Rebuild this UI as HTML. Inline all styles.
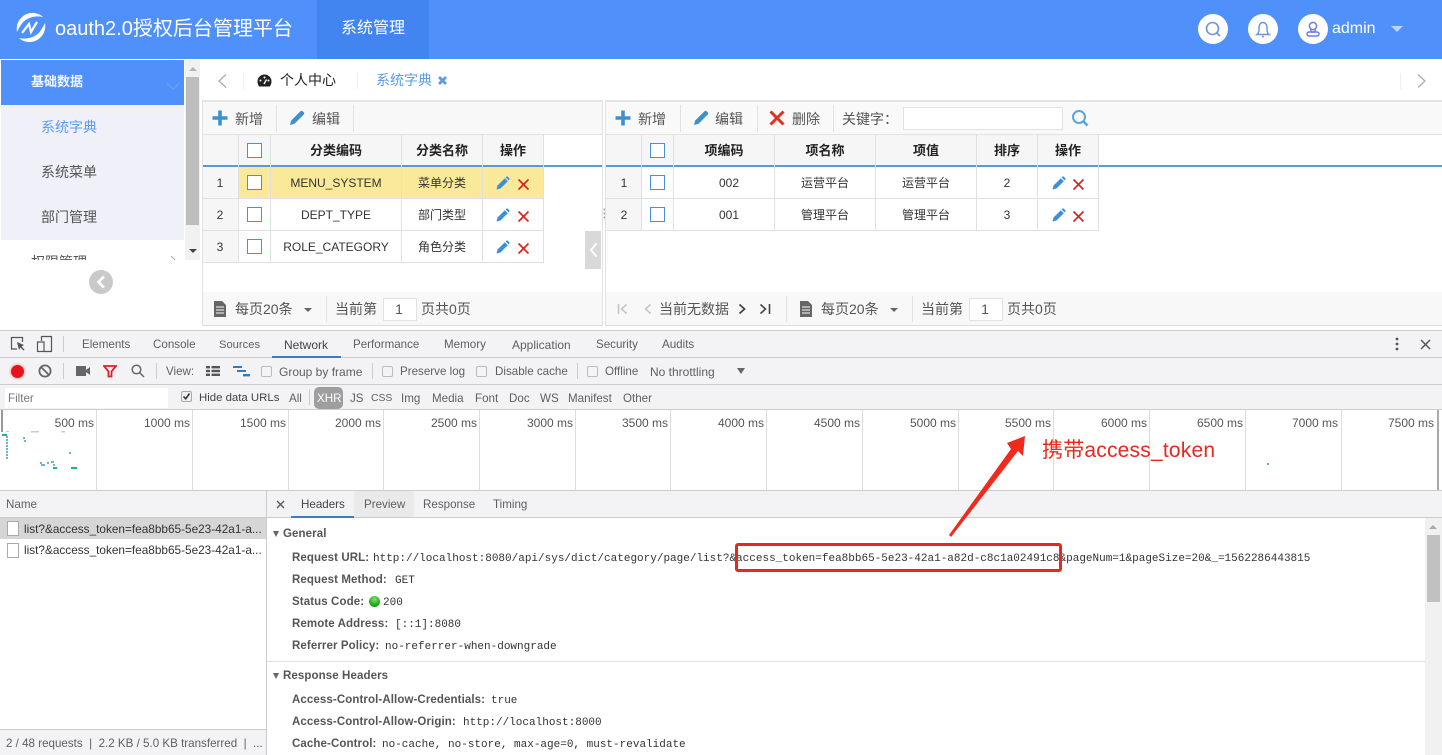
<!DOCTYPE html>
<html lang="zh"><head><meta charset="utf-8"><title>oauth2.0</title>
<style>
*{box-sizing:border-box}
html,body{margin:0;padding:0;width:1442px;height:755px;overflow:hidden;background:#fff}
body{position:relative;font-family:"Liberation Sans","Noto Sans CJK SC",sans-serif;color:#333}
.b,.t,svg.i{position:absolute}
.t{white-space:nowrap;line-height:16px;font-size:14px}
.c{transform:translateX(-50%)}
.cj{font-size:12px;color:#333;margin-top:1px}
.hd{font-size:13px;font-weight:bold;color:#222;margin-top:1px}
.g{color:#555}
.dv{font-size:11.6px;color:#5f5f5f}
.tl{font-size:12px;color:#555;text-align:right;width:70px}
.gl{position:absolute;top:410px;height:80px;width:1px;background:#ddd}
.bold{font-size:11.5px;letter-spacing:.1px;font-weight:bold;color:#555}
.mono{font-family:"Liberation Mono","DejaVu Sans Mono",monospace;font-size:11px;color:#333;margin-top:1px}
.ck{position:absolute;width:15px;height:15px;border:1px solid #4a8fd8;background:#fff}
.dc{position:absolute;width:11px;height:11px;border:1px solid #bbb;border-radius:2px;background:#f4f3f6}
.sep{position:absolute;width:1px;background:#e2e2e2}
</style></head><body>

<!-- header -->
<div class="b" style="left:0;top:0;width:1442px;height:59px;background:#4f90fb"></div>
<div class="b" style="left:317px;top:0;width:112px;height:59px;background:#4285f0"></div>
<svg class="i" style="left:16px;top:12px" width="31" height="31" viewBox="0 0 31 31">
<path id="lg" d="M1 20C-1 9 8 0 18 1C22 1.5 25 3 27 5C19 3 9 6 5 13C3 16 2 18 1 20Z" fill="#fff"/>
<path d="M1 20C-1 9 8 0 18 1C22 1.5 25 3 27 5C19 3 9 6 5 13C3 16 2 18 1 20Z" fill="#fff" transform="rotate(180 15 15.5)"/>
<path d="M6 21L13 12L15 20L21 10" fill="none" stroke="#fff" stroke-width="2.2"/></svg>
<div class="t" style="left:55px;top:17px;font-size:20px;line-height:24px;color:#fff">oauth2.0授权后台管理平台</div>
<div class="t" style="left:341px;top:21px;font-size:16px;color:#fff">系统管理</div>
<div class="b" style="left:1198px;top:14px;width:30px;height:30px;border-radius:50%;background:#fff"></div>
<div class="b" style="left:1248px;top:14px;width:30px;height:30px;border-radius:50%;background:#fff"></div>
<div class="b" style="left:1298px;top:14px;width:30px;height:30px;border-radius:50%;background:#fff"></div>
<svg class="i" style="left:1204px;top:20px" width="18" height="18" viewBox="0 0 18 18" fill="none" stroke="#6d93e8" stroke-width="1.6"><circle cx="8.5" cy="8.5" r="6"/><path d="M13 13L16 16"/></svg>
<svg class="i" style="left:1254px;top:20px" width="18" height="18" viewBox="0 0 18 18" fill="none" stroke="#6d93e8" stroke-width="1.5"><path d="M3 14.5C5 13 5 11 5 7.5C5 4.5 6.8 2.5 9 2.5S13 4.5 13 7.5C13 11 13 13 15 14.5Z"/><path d="M8 16.5H10"/></svg>
<svg class="i" style="left:1304px;top:20px" width="18" height="18" viewBox="0 0 18 18" fill="none" stroke="#6d7de8" stroke-width="1.5"><circle cx="9" cy="6" r="3.6"/><path d="M7 9.5L6.5 12H11.5L11 9.5"/><rect x="3" y="12" width="12" height="4" rx="2"/></svg>
<div class="t" style="left:1332px;top:21px;font-size:16px;color:#fff">admin</div>
<div class="b" style="left:1391px;top:26px;width:0;height:0;border-left:6px solid transparent;border-right:6px solid transparent;border-top:6px solid #bcd4fb"></div>

<!-- sidebar -->
<div class="b" style="left:1px;top:60px;width:183px;height:45px;background:#4f90fb"></div>
<div class="b" style="left:1px;top:105px;width:183px;height:135px;background:#eff0f8"></div>
<div class="t" style="left:31px;top:74px;font-size:13px;font-weight:bold;color:#f2f6ff;width:56px">基础数据</div>
<svg class="i" style="left:166px;top:82px" width="14" height="9" viewBox="0 0 14 9" fill="none" stroke="#6ea3f5" stroke-width="1"><path d="M1 1L7 7L13 1"/></svg>
<div class="t" style="left:41px;top:119px;font-size:14px;color:#5b9cf5">系统字典</div>
<div class="t" style="left:41px;top:164px;font-size:14px;color:#555">系统菜单</div>
<div class="t" style="left:41px;top:209px;font-size:14px;color:#555">部门管理</div>
<div class="b" style="left:31px;top:240px;width:60px;height:20px;overflow:hidden"><div class="t" style="left:0;top:14px;font-size:14px;color:#555">权限管理</div></div>
<svg class="i" style="left:170px;top:256px" width="8" height="5" viewBox="0 0 8 5" fill="none" stroke="#aaa"><path d="M1 0L5 4"/></svg>
<div class="b" style="left:185px;top:60px;width:15px;height:200px;background:#f1f1f1"></div>
<div class="b" style="left:186px;top:77px;width:13px;height:148px;background:#bdbdbd"></div>
<div class="b" style="left:189px;top:67px;width:0;height:0;border-left:4px solid transparent;border-right:4px solid transparent;border-bottom:4px solid #b5b5b5"></div>
<div class="b" style="left:189px;top:249px;width:0;height:0;border-left:4px solid transparent;border-right:4px solid transparent;border-top:4px solid #444"></div>
<div class="b" style="left:89px;top:270px;width:24px;height:24px;border-radius:50%;background:#c9c9c9"></div>
<svg class="i" style="left:95px;top:275px" width="12" height="14" viewBox="0 0 12 14" fill="none" stroke="#fff" stroke-width="2.6"><path d="M9 1.5L3.5 7L9 12.5"/></svg>

<!-- tabs -->
<svg class="i" style="left:216px;top:73px" width="12" height="16" viewBox="0 0 12 16" fill="none" stroke="#aaa" stroke-width="1.2"><path d="M10 1.5L3 8L10 14.5"/></svg>
<div class="sep" style="left:243px;top:73px;height:16px;background:#eee"></div>
<svg class="i" style="left:257px;top:74px" width="15" height="13" viewBox="0 0 15 13"><path d="M7.5 0.5A7 7 0 0 0 .5 7.5C.5 9.5 1.2 11 2.2 12.5H12.8C13.8 11 14.5 9.5 14.5 7.5A7 7 0 0 0 7.5 .5Z" fill="#222"/><circle cx="3.5" cy="6.5" r="1" fill="#fff"/><circle cx="7.5" cy="3.5" r="1" fill="#fff"/><circle cx="11.5" cy="6.5" r="1" fill="#fff"/><path d="M7 10L9.5 5.5" stroke="#fff" stroke-width="1.4"/></svg>
<div class="t" style="left:280px;top:72px;color:#222">个人中心</div>
<div class="sep" style="left:357px;top:73px;height:16px;background:#eee"></div>
<div class="t" style="left:376px;top:72px;font-size:14px;color:#5d9ce6">系统字典</div>
<svg class="i" style="left:437px;top:75px" width="11" height="11" viewBox="0 0 11 11" stroke="#5d9ce6" stroke-width="2.8"><path d="M2 2L9 9M9 2L2 9"/></svg>
<div class="sep" style="left:1400px;top:73px;height:16px;background:#eee"></div>
<svg class="i" style="left:1416px;top:73px" width="12" height="16" viewBox="0 0 12 16" fill="none" stroke="#aaa" stroke-width="1.2"><path d="M2 1.5L9 8L2 14.5"/></svg>

<!-- left panel -->
<div class="b" style="left:202px;top:100px;width:401px;height:226px;border:1px solid #e2e2e2;border-top:2px solid #e4e4e4;border-bottom:2px solid #ddd;background:#fff"></div>
<div class="b" style="left:203px;top:102px;width:399px;height:32px;background:#f8f8f8"></div>
<div class="b" style="left:203px;top:134px;width:399px;height:1px;background:#e2e2e2"></div>
<div class="b" style="left:203px;top:135px;width:341px;height:30px;background:#f6f6f6"></div>
<div class="b" style="left:203px;top:165px;width:399px;height:2px;background:#5b9bd5"></div>
<div class="b" style="left:203px;top:167px;width:35px;height:95px;background:#f6f6f6"></div>
<div class="b" style="left:239px;top:167px;width:304px;height:31px;background:#fbe99a"></div>
<div class="b" style="left:203px;top:198px;width:341px;height:1px;background:#e0e0e0"></div>
<div class="b" style="left:203px;top:230px;width:341px;height:1px;background:#e0e0e0"></div>
<div class="b" style="left:203px;top:262px;width:341px;height:1px;background:#e0e0e0"></div>
<div class="sep" style="left:238px;top:135px;height:127px;background:#e0e0e0"></div>
<div class="sep" style="left:270px;top:135px;height:127px;background:#e0e0e0"></div>
<div class="sep" style="left:401px;top:135px;height:127px;background:#e0e0e0"></div>
<div class="sep" style="left:482px;top:135px;height:127px;background:#e0e0e0"></div>
<div class="sep" style="left:543px;top:135px;height:127px;background:#e0e0e0"></div>
<div class="b" style="left:203px;top:292px;width:399px;height:33px;background:#f8f8f8"></div>

<svg class="i" style="left:212px;top:110px" width="16" height="16" viewBox="0 0 16 16" stroke="#3e8fd0" stroke-width="3.6"><path d="M8 0.5V15.5M0.5 8H15.5"/></svg>
<div class="t g" style="left:235px;top:111px;font-size:14px">新增</div>
<div class="sep" style="left:276px;top:105px;height:27px"></div>
<svg class="i" style="left:289px;top:110px" width="16" height="16" viewBox="0 0 16 16"><path d="M1 15L2.2 10.5L11.5 1.2C12.2 .6 13 .6 13.6 1.2L14.8 2.4C15.4 3 15.4 3.8 14.8 4.5L5.5 13.8Z" fill="#3e8fd0"/></svg>
<div class="t g" style="left:312px;top:111px;font-size:14px">编辑</div>
<div class="sep" style="left:353px;top:105px;height:27px"></div>

<div class="ck" style="left:247px;top:143px"></div>
<div class="t hd c" style="left:336px;top:142px">分类编码</div>
<div class="t hd c" style="left:442px;top:142px">分类名称</div>
<div class="t hd c" style="left:513px;top:142px">操作</div>

<div class="t cj c" style="left:220px;top:174px">1</div><div class="ck" style="left:247px;top:175px"></div>
<div class="t cj c" style="left:336px;top:174px">MENU_SYSTEM</div><div class="t cj c" style="left:442px;top:174px">菜单分类</div>
<div class="t cj c" style="left:220px;top:206px">2</div><div class="ck" style="left:247px;top:207px"></div>
<div class="t cj c" style="left:336px;top:206px">DEPT_TYPE</div><div class="t cj c" style="left:442px;top:206px">部门类型</div>
<div class="t cj c" style="left:220px;top:238px">3</div><div class="ck" style="left:247px;top:239px"></div>
<div class="t cj c" style="left:336px;top:238px">ROLE_CATEGORY</div><div class="t cj c" style="left:442px;top:238px">角色分类</div>

<svg width="0" height="0" style="position:absolute"><defs>
<g id="pen"><path d="M.5 13.5L1.5 9.5L8.8 2.2L11.8 5.2L4.5 12.5ZM9.6 1.4L10.3 .7C10.8 .3 11.3 .3 11.8 .7L13.2 2.1C13.7 2.6 13.7 3.1 13.2 3.6L12.5 4.4Z" fill="#3e8fd6"/></g>
<g id="del"><path d="M1.5 1.5L11.5 11.5M11.5 1.5L1.5 11.5" stroke="#d8231c" stroke-width="1.6"/></g>
<g id="doc"><path d="M0 0H8L12 4V16H0Z" fill="#666"/><path d="M2 6H10M2 9H10M2 12H10" stroke="#fff" stroke-width="1"/></g>
</defs></svg>
<svg class="i" style="left:496px;top:176px" width="14" height="14"><use href="#pen"/></svg><svg class="i" style="left:517px;top:178px" width="13" height="13"><use href="#del"/></svg>
<svg class="i" style="left:496px;top:208px" width="14" height="14"><use href="#pen"/></svg><svg class="i" style="left:517px;top:210px" width="13" height="13"><use href="#del"/></svg>
<svg class="i" style="left:496px;top:240px" width="14" height="14"><use href="#pen"/></svg><svg class="i" style="left:517px;top:242px" width="13" height="13"><use href="#del"/></svg>

<div class="b" style="left:585px;top:231px;width:16px;height:38px;background:#d9d9d9"></div>
<svg class="i" style="left:589px;top:242px" width="9" height="16" viewBox="0 0 9 16" fill="none" stroke="#fff" stroke-width="2"><path d="M7.5 1.5L2 8L7.5 14.5"/></svg>

<svg class="i" style="left:214px;top:301px" width="12" height="16"><use href="#doc"/></svg>
<div class="t g" style="left:235px;top:301px">每页20条</div>
<div class="b" style="left:304px;top:308px;width:0;height:0;border-left:4px solid transparent;border-right:4px solid transparent;border-top:4px solid #666"></div>
<div class="sep" style="left:326px;top:296px;height:26px"></div>
<div class="t g" style="left:335px;top:301px">当前第</div>
<div class="b" style="left:383px;top:298px;width:34px;height:23px;background:#fff;border:1px solid #e2e2e2"></div>
<div class="t g c" style="left:399px;top:301px">1</div>
<div class="t g" style="left:421px;top:301px">页共0页</div>

<!-- splitter -->
<svg class="i" style="left:603px;top:208px" width="3" height="12"><circle cx="1.5" cy="1.5" r="1" fill="#999"/><circle cx="1.5" cy="5.5" r="1" fill="#999"/><circle cx="1.5" cy="9.5" r="1" fill="#999"/></svg>

<!-- right panel -->
<div class="b" style="left:605px;top:100px;width:837px;height:226px;border:1px solid #e2e2e2;border-top:2px solid #e4e4e4;border-bottom:2px solid #ddd;border-right:0;background:#fff"></div>
<div class="b" style="left:606px;top:102px;width:836px;height:32px;background:#f9f9f9"></div>
<div class="b" style="left:606px;top:134px;width:836px;height:1px;background:#e2e2e2"></div>
<div class="b" style="left:606px;top:135px;width:493px;height:30px;background:#f6f6f6"></div>
<div class="b" style="left:606px;top:165px;width:836px;height:2px;background:#5b9bd5"></div>
<div class="b" style="left:606px;top:167px;width:35px;height:63px;background:#f6f6f6"></div>
<div class="b" style="left:606px;top:198px;width:493px;height:1px;background:#e0e0e0"></div>
<div class="b" style="left:606px;top:230px;width:493px;height:1px;background:#e0e0e0"></div>
<div class="sep" style="left:641px;top:135px;height:95px;background:#e0e0e0"></div>
<div class="sep" style="left:673px;top:135px;height:95px;background:#e0e0e0"></div>
<div class="sep" style="left:774px;top:135px;height:95px;background:#e0e0e0"></div>
<div class="sep" style="left:875px;top:135px;height:95px;background:#e0e0e0"></div>
<div class="sep" style="left:976px;top:135px;height:95px;background:#e0e0e0"></div>
<div class="sep" style="left:1037px;top:135px;height:95px;background:#e0e0e0"></div>
<div class="sep" style="left:1098px;top:135px;height:95px;background:#e0e0e0"></div>
<div class="b" style="left:606px;top:292px;width:836px;height:33px;background:#f8f8f8"></div>

<svg class="i" style="left:615px;top:110px" width="16" height="16" viewBox="0 0 16 16" stroke="#3e8fd0" stroke-width="3.6"><path d="M8 0.5V15.5M0.5 8H15.5"/></svg>
<div class="t g" style="left:638px;top:111px;font-size:14px">新增</div>
<div class="sep" style="left:680px;top:105px;height:27px"></div>
<svg class="i" style="left:693px;top:110px" width="16" height="16" viewBox="0 0 16 16"><path d="M1 15L2.2 10.5L11.5 1.2C12.2 .6 13 .6 13.6 1.2L14.8 2.4C15.4 3 15.4 3.8 14.8 4.5L5.5 13.8Z" fill="#3e8fd0"/></svg>
<div class="t g" style="left:715px;top:111px;font-size:14px">编辑</div>
<div class="sep" style="left:757px;top:105px;height:27px"></div>
<svg class="i" style="left:769px;top:110px" width="16" height="16" viewBox="0 0 16 16" stroke="#e0301e" stroke-width="3"><path d="M1.5 1.5L14.5 14.5M14.5 1.5L1.5 14.5"/></svg>
<div class="t g" style="left:792px;top:111px;font-size:14px">删除</div>
<div class="sep" style="left:833px;top:105px;height:27px"></div>
<div class="t g" style="left:842px;top:111px;font-size:14px">关键字：</div>
<div class="b" style="left:903px;top:107px;width:160px;height:23px;background:#fff;border:1px solid #e2e2e2"></div>
<svg class="i" style="left:1071px;top:109px" width="18" height="18" viewBox="0 0 18 18" fill="none" stroke="#5aa5dc" stroke-width="2"><circle cx="8" cy="8" r="6"/><path d="M12.5 12.5L16.5 16.5" stroke-width="2.6"/></svg>

<div class="ck" style="left:650px;top:143px"></div>
<div class="t hd c" style="left:724px;top:142px">项编码</div>
<div class="t hd c" style="left:825px;top:142px">项名称</div>
<div class="t hd c" style="left:926px;top:142px">项值</div>
<div class="t hd c" style="left:1007px;top:142px">排序</div>
<div class="t hd c" style="left:1068px;top:142px">操作</div>

<div class="t cj c" style="left:624px;top:174px">1</div><div class="ck" style="left:650px;top:175px"></div>
<div class="t cj c" style="left:729px;top:174px">002</div><div class="t cj c" style="left:825px;top:174px">运营平台</div><div class="t cj c" style="left:926px;top:174px">运营平台</div><div class="t cj c" style="left:1007px;top:174px">2</div>
<div class="t cj c" style="left:624px;top:206px">2</div><div class="ck" style="left:650px;top:207px"></div>
<div class="t cj c" style="left:729px;top:206px">001</div><div class="t cj c" style="left:825px;top:206px">管理平台</div><div class="t cj c" style="left:926px;top:206px">管理平台</div><div class="t cj c" style="left:1007px;top:206px">3</div>
<svg class="i" style="left:1052px;top:176px" width="14" height="14"><use href="#pen"/></svg><svg class="i" style="left:1072px;top:178px" width="13" height="13"><use href="#del"/></svg>
<svg class="i" style="left:1052px;top:208px" width="14" height="14"><use href="#pen"/></svg><svg class="i" style="left:1072px;top:210px" width="13" height="13"><use href="#del"/></svg>

<svg class="i" style="left:617px;top:303px" width="12" height="12" viewBox="0 0 12 12" fill="none" stroke="#c5c5c5" stroke-width="1.6"><path d="M1.5 1V11M9.5 1.5L4.5 6L9.5 10.5"/></svg>
<svg class="i" style="left:644px;top:303px" width="8" height="12" viewBox="0 0 8 12" fill="none" stroke="#c5c5c5" stroke-width="1.6"><path d="M6.5 1.5L1.5 6L6.5 10.5"/></svg>
<div class="t g" style="left:659px;top:301px">当前无数据</div>
<svg class="i" style="left:738px;top:303px" width="8" height="12" viewBox="0 0 8 12" fill="none" stroke="#444" stroke-width="1.8"><path d="M1.5 1.5L6.5 6L1.5 10.5"/></svg>
<svg class="i" style="left:759px;top:303px" width="12" height="12" viewBox="0 0 12 12" fill="none" stroke="#444" stroke-width="1.6"><path d="M1.5 1.5L6.5 6L1.5 10.5M10.5 1V11"/></svg>
<div class="sep" style="left:786px;top:296px;height:26px"></div>
<svg class="i" style="left:800px;top:301px" width="12" height="16"><use href="#doc"/></svg>
<div class="t g" style="left:821px;top:301px">每页20条</div>
<div class="b" style="left:890px;top:308px;width:0;height:0;border-left:4px solid transparent;border-right:4px solid transparent;border-top:4px solid #666"></div>
<div class="sep" style="left:912px;top:296px;height:26px"></div>
<div class="t g" style="left:921px;top:301px">当前第</div>
<div class="b" style="left:969px;top:298px;width:34px;height:23px;background:#fff;border:1px solid #e2e2e2"></div>
<div class="t g c" style="left:985px;top:301px">1</div>
<div class="t g" style="left:1007px;top:301px">页共0页</div>

<!-- devtools -->
<div class="b" style="left:0;top:326px;width:1442px;height:4px;background:#fff"></div>
<div class="b" style="left:0;top:330px;width:1442px;height:80px;background:#f3f2f5"></div>
<div class="b" style="left:0;top:330px;width:1442px;height:1px;background:#ccc"></div>
<div class="b" style="left:0;top:357px;width:1442px;height:1px;background:#ccc"></div>
<div class="b" style="left:0;top:384px;width:1442px;height:1px;background:#ccc"></div>
<div class="b" style="left:0;top:409px;width:1442px;height:1px;background:#ccc"></div>

<svg class="i" style="left:10px;top:336px" width="16" height="16" viewBox="0 0 16 16" fill="none" stroke="#555" stroke-width="1.2"><path d="M7 13H1.5V1.5H12.5V6"/><path d="M7 6L9 14L10.5 11.5L13.5 14.5L14.5 13.5L11.5 10.5L14 9Z" fill="#555" stroke="none"/></svg>
<svg class="i" style="left:36px;top:335px" width="17" height="18" viewBox="0 0 17 18" fill="none" stroke="#555" stroke-width="1.2"><path d="M5.5 6V1.5H15.5V16.5H8"/><rect x="1.5" y="7" width="6.5" height="9.5"/></svg>
<div class="sep" style="left:63px;top:336px;height:16px;background:#ccc"></div>
<div class="t dv" style="left:82px;top:337px">Elements</div>
<div class="t dv" style="left:153px;top:337px">Console</div>
<div class="t dv" style="left:219px;top:337px;font-size:11.2px">Sources</div>
<div class="t dv" style="left:284px;top:337px;color:#444;font-size:12px">Network</div>
<div class="b" style="left:272px;top:356px;width:69px;height:2px;background:#3a7cc6"></div>
<div class="t dv" style="left:353px;top:337px">Performance</div>
<div class="t dv" style="left:444px;top:337px">Memory</div>
<div class="t dv" style="left:512px;top:337px;font-size:12px">Application</div>
<div class="t dv" style="left:596px;top:337px">Security</div>
<div class="t dv" style="left:662px;top:337px">Audits</div>
<svg class="i" style="left:1394px;top:337px" width="6" height="15"><circle cx="3" cy="2" r="1.4" fill="#555"/><circle cx="3" cy="7" r="1.4" fill="#555"/><circle cx="3" cy="12" r="1.4" fill="#555"/></svg>
<svg class="i" style="left:1420px;top:339px" width="11" height="11" stroke="#555" stroke-width="1.5"><path d="M1 1L10 10M10 1L1 10"/></svg>

<div class="b" style="left:10.5px;top:364.5px;width:13px;height:13px;border-radius:50%;background:#e5131b;box-shadow:0 0 2px 1px #f3b4b6"></div>
<svg class="i" style="left:38px;top:364px" width="14" height="14" viewBox="0 0 14 14" fill="none" stroke="#666" stroke-width="1.8"><circle cx="7" cy="7" r="5.6"/><path d="M3 3L11 11"/></svg>
<div class="sep" style="left:63px;top:363px;height:16px;background:#ccc"></div>
<svg class="i" style="left:76px;top:366px" width="14" height="10"><rect width="10" height="10" fill="#666"/><path d="M10 4L14 1V9L10 6Z" fill="#666"/></svg>
<svg class="i" style="left:103px;top:365px" width="14" height="13" viewBox="0 0 14 13" fill="none" stroke="#d8232a" stroke-width="1.8"><path d="M1 1H13L8.5 6.5V11.5H5.5V6.5Z"/></svg>
<svg class="i" style="left:131px;top:364px" width="14" height="14" viewBox="0 0 14 14" fill="none" stroke="#666" stroke-width="1.5"><circle cx="5.5" cy="5.5" r="4.3"/><path d="M8.8 8.8L13 13"/></svg>
<div class="sep" style="left:156px;top:363px;height:16px;background:#ccc"></div>
<div class="t dv" style="left:166px;top:364px">View:</div>
<svg class="i" style="left:206px;top:366px" width="14" height="10" fill="#555"><rect width="4" height="2.4"/><rect x="5.5" width="8.5" height="2.4"/><rect y="3.8" width="4" height="2.4"/><rect x="5.5" y="3.8" width="8.5" height="2.4"/><rect y="7.6" width="4" height="2.4"/><rect x="5.5" y="7.6" width="8.5" height="2.4"/></svg>
<svg class="i" style="left:233px;top:366px" width="17" height="11" fill="#2a7fc4"><rect width="9" height="2"/><rect x="4" y="4" width="9" height="2"/><rect x="10" y="8" width="7" height="2.4"/></svg>
<div class="dc" style="left:261px;top:366px"></div><div class="t dv" style="left:279px;top:364px;font-size:12px">Group by frame</div>
<div class="sep" style="left:372px;top:363px;height:16px;background:#ccc"></div>
<div class="dc" style="left:382px;top:366px"></div><div class="t dv" style="left:400px;top:364px">Preserve log</div>
<div class="dc" style="left:476px;top:366px"></div><div class="t dv" style="left:495px;top:364px">Disable cache</div>
<div class="sep" style="left:577px;top:363px;height:16px;background:#ccc"></div>
<div class="dc" style="left:587px;top:366px"></div><div class="t dv" style="left:605px;top:364px">Offline</div>
<div class="t dv" style="left:650px;top:364px;font-size:12px">No throttling</div>
<div class="b" style="left:737px;top:368px;width:0;height:0;border-left:4px solid transparent;border-right:4px solid transparent;border-top:6px solid #666"></div>

<div class="b" style="left:5px;top:388px;width:163px;height:20px;background:#fff"></div>
<div class="t dv" style="left:8px;top:391px;color:#777">Filter</div>
<div class="dc" style="left:181px;top:391px;background:#eee;border-color:#aaa"></div>
<svg class="i" style="left:182px;top:392px" width="9" height="9" fill="none" stroke="#333" stroke-width="1.6"><path d="M1.5 4.5L3.7 6.8L7.5 1.5"/></svg>
<div class="t dv" style="left:199px;top:390px;color:#444;font-size:11.4px">Hide data URLs</div>
<div class="t dv" style="left:289px;top:391px">All</div>
<div class="sep" style="left:309px;top:389px;height:16px;background:#ccc"></div>
<div class="b" style="left:314px;top:387px;width:29px;height:22px;border-radius:5px;background:#9e9e9e"></div>
<div class="t dv" style="left:317px;top:391px;color:#fff">XHR</div>
<div class="t dv" style="left:350px;top:391px">JS</div>
<div class="t dv" style="left:371px;top:391px;font-size:10.4px">CSS</div>
<div class="t dv" style="left:401px;top:391px">Img</div>
<div class="t dv" style="left:432px;top:391px">Media</div>
<div class="t dv" style="left:475px;top:391px">Font</div>
<div class="t dv" style="left:509px;top:391px">Doc</div>
<div class="t dv" style="left:540px;top:391px">WS</div>
<div class="t dv" style="left:568px;top:391px">Manifest</div>
<div class="t dv" style="left:623px;top:391px">Other</div>

<!-- timeline -->
<div class="b" style="left:0;top:410px;width:1442px;height:80px;background:#fff"></div>
<div class="b" style="left:1px;top:410px;width:2px;height:22px;background:#999"></div>
<div class="gl" style="left:96px"></div><div class="gl" style="left:192px"></div><div class="gl" style="left:288px"></div><div class="gl" style="left:383px"></div><div class="gl" style="left:479px"></div><div class="gl" style="left:575px"></div><div class="gl" style="left:670px"></div><div class="gl" style="left:766px"></div><div class="gl" style="left:862px"></div><div class="gl" style="left:958px"></div><div class="gl" style="left:1053px"></div><div class="gl" style="left:1149px"></div><div class="gl" style="left:1245px"></div><div class="gl" style="left:1341px"></div><div class="gl" style="left:1437px;background:#aaa;width:2px"></div>
<div class="t tl" style="left:24px;top:415px">500 ms</div>
<div class="t tl" style="left:120px;top:415px">1000 ms</div>
<div class="t tl" style="left:216px;top:415px">1500 ms</div>
<div class="t tl" style="left:311px;top:415px">2000 ms</div>
<div class="t tl" style="left:407px;top:415px">2500 ms</div>
<div class="t tl" style="left:503px;top:415px">3000 ms</div>
<div class="t tl" style="left:598px;top:415px">3500 ms</div>
<div class="t tl" style="left:694px;top:415px">4000 ms</div>
<div class="t tl" style="left:790px;top:415px">4500 ms</div>
<div class="t tl" style="left:886px;top:415px">5000 ms</div>
<div class="t tl" style="left:981px;top:415px">5500 ms</div>
<div class="t tl" style="left:1077px;top:415px">6000 ms</div>
<div class="t tl" style="left:1173px;top:415px">6500 ms</div>
<div class="t tl" style="left:1268px;top:415px">7000 ms</div>
<div class="t tl" style="left:1364px;top:415px">7500 ms</div>
<svg class="i" style="left:0;top:410px" width="90" height="80">
<g fill="#ccc"><rect x="6" y="21" width="3" height="1"/><rect x="31" y="21" width="8" height="1.5"/><rect x="61" y="21" width="4" height="1.5"/></g>
<g fill="#2aa8a8"><rect x="2" y="24" width="5" height="2"/></g>
<g fill="#6bb3cf"><rect x="6" y="26" width="2" height="2"/><rect x="6" y="29" width="2" height="2"/><rect x="6" y="32" width="2" height="2"/><rect x="6" y="35" width="2" height="2"/><rect x="6" y="38" width="2" height="2"/><rect x="6" y="41" width="2" height="2"/><rect x="6" y="44" width="2" height="2"/><rect x="6" y="47" width="2" height="2"/><rect x="23" y="27" width="2" height="2"/><rect x="24" y="30" width="2" height="2"/><rect x="69" y="42" width="2" height="2"/><rect x="40" y="52" width="2" height="2"/><rect x="41" y="54" width="4" height="2"/><rect x="47" y="52" width="2" height="2"/><rect x="51" y="51" width="3" height="2"/><rect x="53" y="54" width="2" height="2"/></g>
<g fill="#1cb28a"><rect x="53" y="57" width="4" height="2"/><rect x="71" y="57" width="6" height="2"/></g></svg>
<div class="b" style="left:1267px;top:463px;width:2px;height:2px;background:#6ba6c8"></div>
<div class="b" style="left:0;top:490px;width:1442px;height:1px;background:#ccc"></div>

<!-- bottom -->
<div class="b" style="left:0;top:491px;width:1442px;height:26px;background:#f3f2f5"></div>
<div class="b" style="left:0;top:517px;width:1442px;height:1px;background:#ccc"></div>
<div class="b" style="left:266px;top:491px;width:1px;height:264px;background:#ccc"></div>
<div class="t dv" style="left:6px;top:497px">Name</div>
<div class="b" style="left:0;top:518px;width:266px;height:21px;background:#d6d6d6"></div>
<div class="b" style="left:7px;top:521px;width:12px;height:15px;background:#fff;border:1px solid #aaa"></div>
<div class="t dv" style="left:24px;top:521px;color:#333;font-size:11.8px">list?&amp;access_token=fea8bb65-5e23-42a1-a...</div>
<div class="b" style="left:7px;top:543px;width:12px;height:15px;background:#fff;border:1px solid #aaa"></div>
<div class="t dv" style="left:24px;top:542px;color:#333;font-size:11.8px">list?&amp;access_token=fea8bb65-5e23-42a1-a...</div>
<div class="b" style="left:0;top:729px;width:266px;height:26px;background:#f3f2f5;border-top:1px solid #ccc"></div>
<div class="t dv" style="left:6px;top:736px;font-size:11.6px">2 / 48 requests &nbsp;|&nbsp; 2.2 KB / 5.0 KB transferred &nbsp;|&nbsp; ...</div>

<svg class="i" style="left:276px;top:500px" width="9" height="9" stroke="#555" stroke-width="1.3"><path d="M1 1L8 8M8 1L1 8"/></svg>
<div class="t dv" style="left:301px;top:497px;color:#444">Headers</div>
<div class="b" style="left:291px;top:516px;width:63px;height:2px;background:#3a7cc6"></div>
<div class="b" style="left:354px;top:491px;width:60px;height:26px;background:#eaeaea"></div>
<div class="t dv" style="left:364px;top:497px">Preview</div>
<div class="t dv" style="left:423px;top:497px">Response</div>
<div class="t dv" style="left:493px;top:497px">Timing</div>

<div class="b" style="left:273px;top:531px;width:0;height:0;border-left:3.5px solid transparent;border-right:3.5px solid transparent;border-top:6px solid #666"></div>
<div class="t bold" style="left:283px;top:526px">General</div>
<div class="t bold" style="left:292px;top:550px">Request URL:</div>
<div class="t mono" style="left:373px;top:550px">http://localhost:8080/api/sys/dict/category/page/list?&amp;access_token=fea8bb65-5e23-42a1-a82d-c8c1a02491c8&amp;pageNum=1&amp;pageSize=20&amp;_=1562286443815</div>
<div class="t bold" style="left:292px;top:572px">Request Method:</div>
<div class="t mono" style="left:395px;top:572px">GET</div>
<div class="t bold" style="left:292px;top:594px">Status Code:</div>
<div class="b" style="left:369px;top:596px;width:11px;height:11px;border-radius:50%;background:radial-gradient(circle at 50% 30%,#7fe36a,#0fa30f 70%)"></div>
<div class="t mono" style="left:383px;top:594px">200</div>
<div class="t bold" style="left:292px;top:616px">Remote Address:</div>
<div class="t mono" style="left:395px;top:616px">[::1]:8080</div>
<div class="t bold" style="left:292px;top:638px">Referrer Policy:</div>
<div class="t mono" style="left:385px;top:638px">no-referrer-when-downgrade</div>
<div class="b" style="left:267px;top:661px;width:1158px;height:1px;background:#ddd"></div>
<div class="b" style="left:273px;top:673px;width:0;height:0;border-left:3.5px solid transparent;border-right:3.5px solid transparent;border-top:6px solid #666"></div>
<div class="t bold" style="left:283px;top:668px">Response Headers</div>
<div class="t bold" style="left:292px;top:692px">Access-Control-Allow-Credentials:</div>
<div class="t mono" style="left:491px;top:692px">true</div>
<div class="t bold" style="left:292px;top:714px">Access-Control-Allow-Origin:</div>
<div class="t mono" style="left:463px;top:714px">http://localhost:8000</div>
<div class="t bold" style="left:292px;top:736px">Cache-Control:</div>
<div class="t mono" style="left:382px;top:736px">no-cache, no-store, max-age=0, must-revalidate</div>

<div class="b" style="left:1425px;top:518px;width:17px;height:237px;background:#f1f1f1"></div>
<div class="b" style="left:1427px;top:535px;width:13px;height:67px;background:#c1c1c1"></div>
<div class="b" style="left:1429px;top:525px;width:0;height:0;border-left:4px solid transparent;border-right:4px solid transparent;border-bottom:4px solid #aaa"></div>

<!-- annotations -->
<div class="b" style="left:735px;top:543px;width:327px;height:29px;border:3px solid #e8281d;border-radius:3px"></div>
<svg class="i" style="left:940px;top:430px" width="90" height="110"><path d="M9 105L71 19L67 13L85 6L83 26L78 21L11 107Z" fill="#f02a1c"/></svg>
<div class="t" style="left:1042px;top:437px;font-size:21px;line-height:28px;color:#e8281d;letter-spacing:.2px">携带access_token</div>
</body></html>
